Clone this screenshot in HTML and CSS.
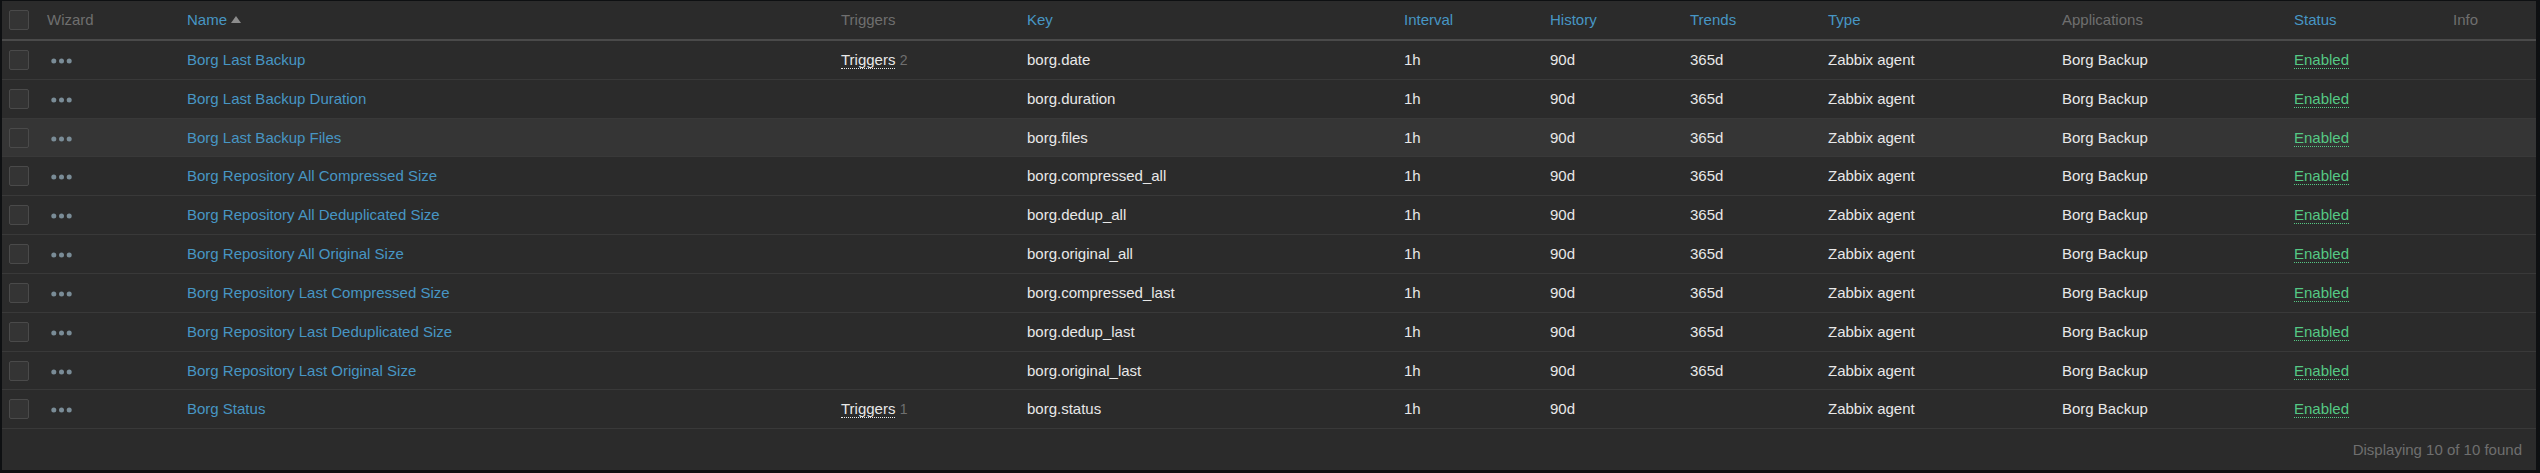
FILE: index.html
```html
<!DOCTYPE html>
<html lang="en">
<head>
<meta charset="utf-8">
<title>Items</title>
<link rel="stylesheet" href="styles.css">
</head>
<body>
<div class="panel">
  <div class="row head">
    <div class="cell cb-cell"><span class="checkbox"></span></div>
    <div class="cell muted">Wizard</div>
    <div class="cell link">Name<span class="sort-up"></span></div>
    <div class="cell muted">Triggers</div>
    <div class="cell link">Key</div>
    <div class="cell link">Interval</div>
    <div class="cell link">History</div>
    <div class="cell link">Trends</div>
    <div class="cell link">Type</div>
    <div class="cell muted">Applications</div>
    <div class="cell link">Status</div>
    <div class="cell muted">Info</div>
  </div>

  <div class="row">
    <div class="cell cb-cell"><span class="checkbox"></span></div>
    <div class="cell"><svg class="dots" width="21" height="6" viewBox="0 0 21 6"><circle cx="2.8" cy="3" r="2.5"/><circle cx="10.5" cy="3" r="2.5"/><circle cx="18.2" cy="3" r="2.5"/></svg></div>
    <div class="cell link">Borg Last Backup</div>
    <div class="cell"><span class="action">Triggers</span> <span class="count">2</span></div>
    <div class="cell">borg.date</div>
    <div class="cell">1h</div>
    <div class="cell">90d</div>
    <div class="cell">365d</div>
    <div class="cell">Zabbix agent</div>
    <div class="cell">Borg Backup</div>
    <div class="cell"><span class="action green">Enabled</span></div>
    <div class="cell"></div>
  </div>

  <div class="row">
    <div class="cell cb-cell"><span class="checkbox"></span></div>
    <div class="cell"><svg class="dots" width="21" height="6" viewBox="0 0 21 6"><circle cx="2.8" cy="3" r="2.5"/><circle cx="10.5" cy="3" r="2.5"/><circle cx="18.2" cy="3" r="2.5"/></svg></div>
    <div class="cell link">Borg Last Backup Duration</div>
    <div class="cell"></div>
    <div class="cell">borg.duration</div>
    <div class="cell">1h</div>
    <div class="cell">90d</div>
    <div class="cell">365d</div>
    <div class="cell">Zabbix agent</div>
    <div class="cell">Borg Backup</div>
    <div class="cell"><span class="action green">Enabled</span></div>
    <div class="cell"></div>
  </div>

  <div class="row hover">
    <div class="cell cb-cell"><span class="checkbox"></span></div>
    <div class="cell"><svg class="dots" width="21" height="6" viewBox="0 0 21 6"><circle cx="2.8" cy="3" r="2.5"/><circle cx="10.5" cy="3" r="2.5"/><circle cx="18.2" cy="3" r="2.5"/></svg></div>
    <div class="cell link">Borg Last Backup Files</div>
    <div class="cell"></div>
    <div class="cell">borg.files</div>
    <div class="cell">1h</div>
    <div class="cell">90d</div>
    <div class="cell">365d</div>
    <div class="cell">Zabbix agent</div>
    <div class="cell">Borg Backup</div>
    <div class="cell"><span class="action green">Enabled</span></div>
    <div class="cell"></div>
  </div>

  <div class="row">
    <div class="cell cb-cell"><span class="checkbox"></span></div>
    <div class="cell"><svg class="dots" width="21" height="6" viewBox="0 0 21 6"><circle cx="2.8" cy="3" r="2.5"/><circle cx="10.5" cy="3" r="2.5"/><circle cx="18.2" cy="3" r="2.5"/></svg></div>
    <div class="cell link">Borg Repository All Compressed Size</div>
    <div class="cell"></div>
    <div class="cell">borg.compressed_all</div>
    <div class="cell">1h</div>
    <div class="cell">90d</div>
    <div class="cell">365d</div>
    <div class="cell">Zabbix agent</div>
    <div class="cell">Borg Backup</div>
    <div class="cell"><span class="action green">Enabled</span></div>
    <div class="cell"></div>
  </div>

  <div class="row">
    <div class="cell cb-cell"><span class="checkbox"></span></div>
    <div class="cell"><svg class="dots" width="21" height="6" viewBox="0 0 21 6"><circle cx="2.8" cy="3" r="2.5"/><circle cx="10.5" cy="3" r="2.5"/><circle cx="18.2" cy="3" r="2.5"/></svg></div>
    <div class="cell link">Borg Repository All Deduplicated Size</div>
    <div class="cell"></div>
    <div class="cell">borg.dedup_all</div>
    <div class="cell">1h</div>
    <div class="cell">90d</div>
    <div class="cell">365d</div>
    <div class="cell">Zabbix agent</div>
    <div class="cell">Borg Backup</div>
    <div class="cell"><span class="action green">Enabled</span></div>
    <div class="cell"></div>
  </div>

  <div class="row">
    <div class="cell cb-cell"><span class="checkbox"></span></div>
    <div class="cell"><svg class="dots" width="21" height="6" viewBox="0 0 21 6"><circle cx="2.8" cy="3" r="2.5"/><circle cx="10.5" cy="3" r="2.5"/><circle cx="18.2" cy="3" r="2.5"/></svg></div>
    <div class="cell link">Borg Repository All Original Size</div>
    <div class="cell"></div>
    <div class="cell">borg.original_all</div>
    <div class="cell">1h</div>
    <div class="cell">90d</div>
    <div class="cell">365d</div>
    <div class="cell">Zabbix agent</div>
    <div class="cell">Borg Backup</div>
    <div class="cell"><span class="action green">Enabled</span></div>
    <div class="cell"></div>
  </div>

  <div class="row">
    <div class="cell cb-cell"><span class="checkbox"></span></div>
    <div class="cell"><svg class="dots" width="21" height="6" viewBox="0 0 21 6"><circle cx="2.8" cy="3" r="2.5"/><circle cx="10.5" cy="3" r="2.5"/><circle cx="18.2" cy="3" r="2.5"/></svg></div>
    <div class="cell link">Borg Repository Last Compressed Size</div>
    <div class="cell"></div>
    <div class="cell">borg.compressed_last</div>
    <div class="cell">1h</div>
    <div class="cell">90d</div>
    <div class="cell">365d</div>
    <div class="cell">Zabbix agent</div>
    <div class="cell">Borg Backup</div>
    <div class="cell"><span class="action green">Enabled</span></div>
    <div class="cell"></div>
  </div>

  <div class="row">
    <div class="cell cb-cell"><span class="checkbox"></span></div>
    <div class="cell"><svg class="dots" width="21" height="6" viewBox="0 0 21 6"><circle cx="2.8" cy="3" r="2.5"/><circle cx="10.5" cy="3" r="2.5"/><circle cx="18.2" cy="3" r="2.5"/></svg></div>
    <div class="cell link">Borg Repository Last Deduplicated Size</div>
    <div class="cell"></div>
    <div class="cell">borg.dedup_last</div>
    <div class="cell">1h</div>
    <div class="cell">90d</div>
    <div class="cell">365d</div>
    <div class="cell">Zabbix agent</div>
    <div class="cell">Borg Backup</div>
    <div class="cell"><span class="action green">Enabled</span></div>
    <div class="cell"></div>
  </div>

  <div class="row">
    <div class="cell cb-cell"><span class="checkbox"></span></div>
    <div class="cell"><svg class="dots" width="21" height="6" viewBox="0 0 21 6"><circle cx="2.8" cy="3" r="2.5"/><circle cx="10.5" cy="3" r="2.5"/><circle cx="18.2" cy="3" r="2.5"/></svg></div>
    <div class="cell link">Borg Repository Last Original Size</div>
    <div class="cell"></div>
    <div class="cell">borg.original_last</div>
    <div class="cell">1h</div>
    <div class="cell">90d</div>
    <div class="cell">365d</div>
    <div class="cell">Zabbix agent</div>
    <div class="cell">Borg Backup</div>
    <div class="cell"><span class="action green">Enabled</span></div>
    <div class="cell"></div>
  </div>

  <div class="row">
    <div class="cell cb-cell"><span class="checkbox"></span></div>
    <div class="cell"><svg class="dots" width="21" height="6" viewBox="0 0 21 6"><circle cx="2.8" cy="3" r="2.5"/><circle cx="10.5" cy="3" r="2.5"/><circle cx="18.2" cy="3" r="2.5"/></svg></div>
    <div class="cell link">Borg Status</div>
    <div class="cell"><span class="action">Triggers</span> <span class="count">1</span></div>
    <div class="cell">borg.status</div>
    <div class="cell">1h</div>
    <div class="cell">90d</div>
    <div class="cell"></div>
    <div class="cell">Zabbix agent</div>
    <div class="cell">Borg Backup</div>
    <div class="cell"><span class="action green">Enabled</span></div>
    <div class="cell"></div>
  </div>

  <div class="footer">Displaying 10 of 10 found</div>
</div>
</body>
</html>
```

FILE: styles.css
```css
html, body {
  margin: 0;
  padding: 0;
}

body {
  background: #0e1012;
  font-family: "Liberation Sans", Arial, sans-serif;
  font-size: 15px;
  color: #e8e8e8;
  padding: 1px 4px 3px 2px;
}

.panel {
  height: 469px;
  background: #2b2b2b;
  display: flex;
  flex-direction: column;
}

.row {
  display: grid;
  grid-template-columns: 45px 140px 654px 186px 377px 146px 140px 138px 234px 232px 159px 83px;
  align-items: center;
  height: 38.83px;
  box-sizing: border-box;
  border-bottom: 1px solid #393939;
  flex: none;
}

.row.head {
  height: 40px;
  border-bottom: 2px solid #4a4a4a;
}

.row.hover {
  background: #353535;
}

.cell {
  white-space: nowrap;
  line-height: 18px;
}

.cb-cell {
  padding-left: 7px;
  display: flex;
  align-items: center;
}

.checkbox {
  display: block;
  width: 20px;
  height: 20px;
  box-sizing: border-box;
  border: 1px solid #4a4a4a;
  border-radius: 2px;
  background: #343434;
}

.muted {
  color: #6f6f6f;
}

.link {
  color: #4796c4;
}

.sort-up {
  display: inline-block;
  width: 0;
  height: 0;
  margin-left: 4px;
  vertical-align: 2px;
  border-left: 5px solid transparent;
  border-right: 5px solid transparent;
  border-bottom: 7px solid #8c8c8c;
}

.dots {
  display: block;
  margin-left: 4px;
  margin-top: 2px;
  fill: #7a8c97;
}

.action {
  border-bottom: 1px dotted currentColor;
}

.green {
  color: #55c984;
}

.count {
  color: #6f6f6f;
  font-size: 14px;
}

.footer {
  flex: 1;
  display: flex;
  align-items: center;
  justify-content: flex-end;
  padding-right: 14px;
  color: #6f6f6f;
}
```
